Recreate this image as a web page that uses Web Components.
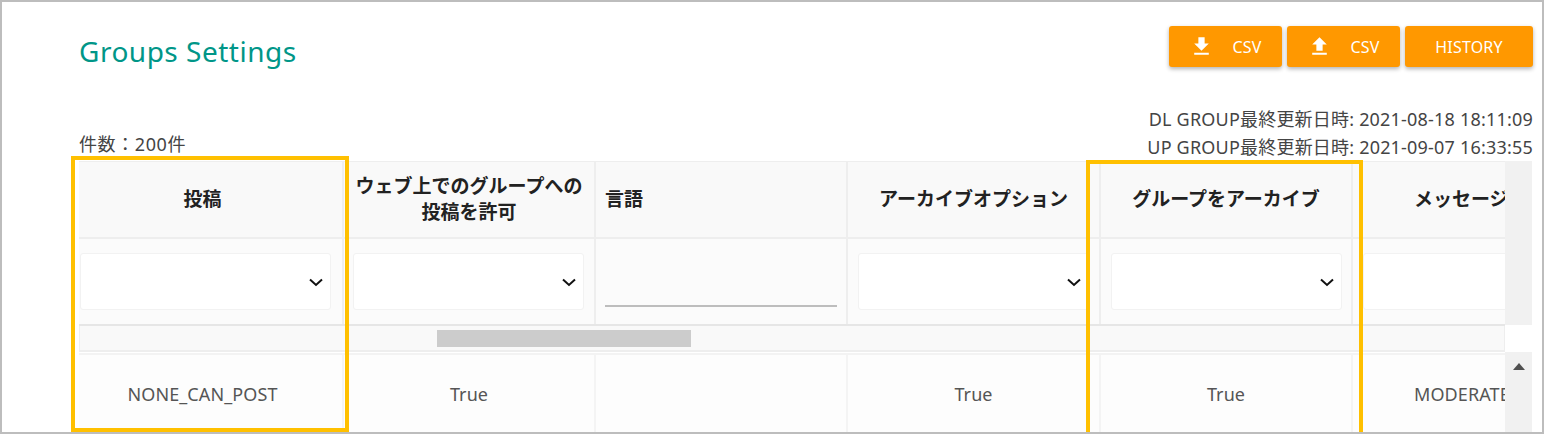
<!DOCTYPE html>
<html lang="ja"><head><meta charset="utf-8">
<style>
html,body{margin:0;padding:0;background:#fff}
body{font-family:"Noto Sans","Noto Sans CJK JP",sans-serif;width:1544px;height:434px;overflow:hidden}
</style></head>
<body>
<template id="t-frame"><style>
:host{display:block;box-sizing:border-box;width:1544px;height:434px;border:2px solid #bdbdbd;padding:24px 9px 0 77px;position:relative;overflow:hidden;background:#fff}
</style><slot></slot></template>

<template id="t-header"><style>
:host{display:flex;justify-content:space-between;align-items:flex-start;height:41px}
h1{margin:0;padding-top:7px;font:400 28px/36px "Noto Sans","Noto Sans CJK JP",sans-serif;color:#009688;letter-spacing:.5px}
.btns{display:flex;gap:5px}
</style><h1><slot name="title"></slot></h1><div class="btns"><slot></slot></div></template>

<template id="t-btn"><style>
:host{display:flex;align-items:center;justify-content:center;box-sizing:border-box;height:41px;background:#ff9800;color:#fff;border-radius:3px;box-shadow:0 2px 4px rgba(0,0,0,.3);font:400 16px/20px "Noto Sans",sans-serif;letter-spacing:.2px;gap:18px}
</style><slot name="icon"></slot><slot></slot></template>

<template id="t-info"><style>
:host{display:flex;justify-content:space-between;align-items:flex-end;height:94px;box-sizing:border-box;font:400 18px/28px "Noto Sans","Noto Sans CJK JP",sans-serif;letter-spacing:.2px;color:#444}
.r{text-align:right}
.r ::slotted(div){white-space:nowrap}
.l{line-height:24px;margin-bottom:5px;letter-spacing:.6px}
</style><div class="l"><slot name="count"></slot></div><div class="r"><slot name="stamp"></slot></div></template>

<template id="t-table"><style>
:host{display:grid;grid-template-columns:1fr 27px;width:1453px;height:271px;overflow:hidden;position:relative}
.main{display:flex;flex-direction:column;min-width:0;overflow:hidden}
.side{display:flex;flex-direction:column}
.s1{height:164px;background:#f1f1f1}
.s2{height:27px;background:#fff}
.s3{flex:1;background:#f1f1f1;display:flex;justify-content:center;padding-top:11px}
.tri{width:0;height:0;border-left:6px solid transparent;border-right:6px solid transparent;border-bottom:7px solid #505050}
</style><div class="main"><slot></slot></div><div class="side"><div class="s1"></div><div class="s2"></div><div class="s3"><div class="tri"></div></div></div></template>

<template id="t-row"><style>
:host{display:grid;grid-template-columns:265px 252px 252px 253px 252px 253px;box-sizing:border-box;width:1527px;flex:none}
:host([kind=head]){height:76px;background:#f9f9f9;border-top:1px solid #eee}
:host([kind=filter]){height:89px;background:#fbfbfb;border-top:2px solid #eee;border-bottom:2px solid #e6e6e6}
:host([kind=data]){height:82px;background:#fdfdfd;border-top:2px solid #f3f3f3;margin-top:1px;--line:#f4f4f4}
</style><slot></slot></template>

<template id="t-cell"><style>
:host{display:flex;box-sizing:border-box;border-right:2px solid var(--line,#eee);align-items:center;justify-content:center;text-align:center;min-width:0;padding:0 10px}
:host([kind=head]){font:700 19px/26px "Noto Sans","Noto Sans CJK JP",sans-serif;color:#222;padding-bottom:1px}
:host([kind=data]){font:400 18px/24px "Noto Sans","Noto Sans CJK JP",sans-serif;letter-spacing:.1px;color:#555;white-space:nowrap;padding-bottom:2px}
:host([kind=left]){justify-content:flex-start;font:700 19px/26px "Noto Sans","Noto Sans CJK JP",sans-serif;color:#222;padding:0 9px 1px}
:host([kind=filter]){padding:0 10px}
:host([first]){padding-left:1px;padding-right:11px}
:host([offset]){padding-right:26px}
:host([tail]){justify-content:flex-start;padding-left:61px;padding-right:0;white-space:nowrap}
</style><slot></slot></template>

<template id="t-select"><style>
:host{display:flex;align-items:center;justify-content:flex-end;box-sizing:border-box;width:100%;height:57px;background:#fff;border:1px solid #f2f2f2;border-radius:3px;padding-right:6px}
svg{width:16px;height:16px;fill:none;stroke:#111;stroke-width:2;display:block}
</style><svg viewBox="0 0 16 16"><path d="M2 5.500 8 11l6-5.500"/></svg></template>

<template id="t-input"><style>
:host{display:block;width:100%;height:50px;box-sizing:border-box;border-bottom:2px solid #bdbdbd}
</style></template>

<template id="t-hscroll"><style>
:host{display:flex;box-sizing:border-box;height:26px;width:1426px;background:#f9f9f9;border:1px solid #eee;border-top:0;border-bottom:2px solid #eee;padding:4px 0 3px 357px;flex:none}
.thumb{width:254px;background:#ccc}
</style><div class="thumb"></div></template>

<template id="t-mark"><style>
:host{position:absolute;box-sizing:border-box;border:4px solid #ffc000;pointer-events:none}
</style></template>

<app-frame>
  <page-header>
    <span slot="title">Groups Settings</span>
    <orange-button style="width:113px"><svg slot="icon" viewBox="0 0 24 24" width="25" height="25" fill="#fff" style="display:block"><path d="M19 9h-4V3H9v6H5l7 7 7-7zM5 18v2h14v-2H5z"/></svg>CSV</orange-button>
    <orange-button style="width:113px"><svg slot="icon" viewBox="0 0 24 24" width="25" height="25" fill="#fff" style="display:block"><path d="M9 16h6v-6h4l-7-7-7 7h4v6zm-4 2h14v2H5v-2z"/></svg>CSV</orange-button>
    <orange-button style="width:128px">HISTORY</orange-button>
  </page-header>
  <info-bar>
    <span slot="count">件数：200件</span>
    <div slot="stamp">DL GROUP最終更新日時: 2021-08-18 18:11:09</div>
    <div slot="stamp">UP GROUP最終更新日時: 2021-09-07 16:33:55</div>
  </info-bar>
  <data-table>
    <table-row kind="head">
      <table-cell kind="head" offset>投稿</table-cell>
      <table-cell kind="head">ウェブ上でのグループへの投稿を許可</table-cell>
      <table-cell kind="left">言語</table-cell>
      <table-cell kind="head">アーカイブオプション</table-cell>
      <table-cell kind="head">グループをアーカイブ</table-cell>
      <table-cell kind="head" tail>メッセージ</table-cell>
    </table-row>
    <table-row kind="filter">
      <table-cell kind="filter" first><filter-select></filter-select></table-cell>
      <table-cell kind="filter" style="padding-left:9px"><filter-select></filter-select></table-cell>
      <table-cell kind="filter" style="padding-left:9px;padding-right:9px"><filter-input></filter-input></table-cell>
      <table-cell kind="filter"><filter-select></filter-select></table-cell>
      <table-cell kind="filter" style="padding-right:9px"><filter-select></filter-select></table-cell>
      <table-cell kind="filter"><filter-select></filter-select></table-cell>
    </table-row>
    <h-scroll></h-scroll>
    <table-row kind="data">
      <table-cell kind="data" offset>NONE_CAN_POST</table-cell>
      <table-cell kind="data">True</table-cell>
      <table-cell kind="data"></table-cell>
      <table-cell kind="data">True</table-cell>
      <table-cell kind="data">True</table-cell>
      <table-cell kind="data" tail>MODERATE</table-cell>
    </table-row>
  </data-table>
  <mark-box style="left:69px;top:154px;width:278px;height:276px"></mark-box>
  <mark-box style="left:1084px;top:158px;width:277px;height:290px"></mark-box>
</app-frame>
<script>
const reg=(tag,id)=>customElements.define(tag,class extends HTMLElement{constructor(){super();this.attachShadow({mode:"open"}).appendChild(document.getElementById(id).content.cloneNode(true));}});
[["app-frame","t-frame"],["page-header","t-header"],["orange-button","t-btn"],["info-bar","t-info"],["data-table","t-table"],["table-row","t-row"],["table-cell","t-cell"],["filter-select","t-select"],["filter-input","t-input"],["h-scroll","t-hscroll"],["mark-box","t-mark"]].forEach(a=>reg(...a));
</script>
</body></html>
